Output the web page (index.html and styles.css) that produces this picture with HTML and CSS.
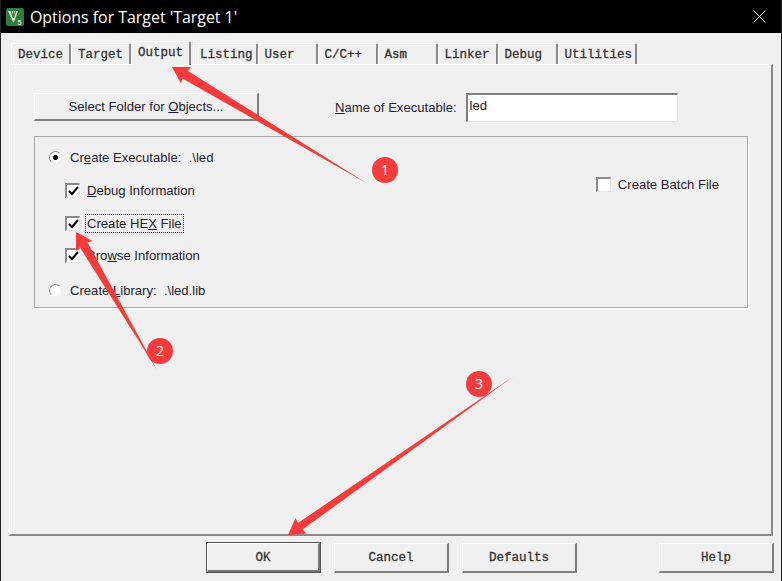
FILE: index.html
```html
<!DOCTYPE html>
<html lang="en">
<head>
    <meta charset="UTF-8">
    <meta name="viewport" content="width=device-width, initial-scale=1.0">
    <title>Options for Target 'Target 1'</title>
    <link rel="stylesheet" href="styles.css">
</head>
<body>
    <div class="window">
        <header class="titlebar">
            <svg class="app-icon" width="18" height="18" viewBox="0 0 18 18">
                <rect x="0" y="0" width="18" height="18" rx="2" fill="#2f7d3a"/>
                <path d="M2 3h10L7.5 15z" fill="#e8f3e6"/>
                <path d="M5 3l2.4 7M7.4 3v7M9.8 3L7.6 10" stroke="#2f7d3a" stroke-width="1.1" fill="none"/>
                <text x="11.5" y="16.5" class="app-icon-num">5</text>
            </svg>
            <span class="title">Options for Target 'Target 1'</span>
            <svg class="close" width="13" height="13" viewBox="0 0 13 13">
                <path d="M0.5 0.5l12 12M12.5 0.5l-12 12" stroke="#fff" stroke-width="1" fill="none"/>
            </svg>
        </header>

        <main class="content">
            <nav class="tabs">
                <div class="tab">Device</div>
                <div class="tab">Target</div>
                <div class="tab active">Output</div>
                <div class="tab">Listing</div>
                <div class="tab">User</div>
                <div class="tab">C/C++</div>
                <div class="tab">Asm</div>
                <div class="tab">Linker</div>
                <div class="tab">Debug</div>
                <div class="tab">Utilities</div>
            </nav>

            <section class="panel">
                <div class="top-row">
                    <button class="btn folder-btn">Select Folder for <u>O</u>bjects...</button>
                    <label class="name-label"><u>N</u>ame of Executable:</label>
                    <input class="name-input" type="text" value="led">
                </div>

                <div class="group">
                    <div class="options">
                        <div class="row">
                            <span class="radio checked"></span>
                            <span>Cr<u>e</u>ate Executable:&nbsp; .\led</span>
                        </div>
                        <div class="row sub">
                            <span class="check on"><svg width="11" height="10" viewBox="0 0 11 10"><path d="M1 5l3 3 6-7" stroke="#000" stroke-width="2" fill="none"/></svg></span>
                            <span><u>D</u>ebug Information</span>
                        </div>
                        <div class="row sub">
                            <span class="check on"><svg width="11" height="10" viewBox="0 0 11 10"><path d="M1 5l3 3 6-7" stroke="#000" stroke-width="2" fill="none"/></svg></span>
                            <span class="focused">Create HE<u>X</u> File</span>
                        </div>
                        <div class="row sub browse">
                            <span class="check on"><svg width="11" height="10" viewBox="0 0 11 10"><path d="M1 5l3 3 6-7" stroke="#000" stroke-width="2" fill="none"/></svg></span>
                            <span>Bro<u>w</u>se Information</span>
                        </div>
                        <div class="row library">
                            <span class="radio"></span>
                            <span>Create <u>L</u>ibrary:&nbsp; .\led.lib</span>
                        </div>
                    </div>
                    <div class="row batch">
                        <span class="check"></span>
                        <span>Create Batch File</span>
                    </div>
                </div>
            </section>

            <footer class="actions">
                <button class="btn action default">OK</button>
                <button class="btn action">Cancel</button>
                <button class="btn action">Defaults</button>
                <button class="btn action help">Help</button>
            </footer>
        </main>

        <svg class="notes" width="782" height="581" viewBox="0 0 782 581">
            <polygon points="172,67 191,67 188,71 368,184 182.5,78.5 181,83.5"/>
            <polygon points="76,232 92.5,241 87.5,242.5 157,370 80,247.5 76,251"/>
            <polygon points="288,535 306.5,533.5 302.5,529.5 514,376 298,523 295.5,518"/>
            <circle cx="385" cy="170" r="13"/>
            <circle cx="160" cy="351" r="13"/>
            <circle cx="479" cy="384" r="13"/>
            <text x="385" y="175" class="num">1</text>
            <text x="160" y="356" class="num">2</text>
            <text x="479" y="389" class="num">3</text>
        </svg>
    </div>
</body>
</html>
```

FILE: styles.css
```css
body {
    margin: 0;
    background-color: #f0f0f0;
    font-family: "Liberation Sans", Arial, sans-serif;
    font-size: 13.1px;
    color: #1f2230;
    overflow: hidden;
}
.window {
    position: relative;
    width: 782px;
    height: 581px;
    box-sizing: border-box;
    border-left: 1px solid #222;
    border-right: 1px solid #222;
    display: flex;
    flex-direction: column;
}
.titlebar {
    height: 33px;
    flex: none;
    background-color: #000;
    display: flex;
    align-items: center;
    padding: 0 15px 0 5px;
    color: #fff;
}
.app-icon {
    margin-right: 6px;
}
.app-icon-num {
    font-family: "Liberation Sans", sans-serif;
    font-size: 7px;
    fill: #fff;
}
.title {
    font-family: "Open Sans", sans-serif;
    font-size: 15.9px;
    flex: 1;
}
.content {
    flex: 1;
    display: flex;
    flex-direction: column;
    padding: 8px 8px 8px 8px;
    min-height: 0;
}
.tabs {
    display: flex;
    align-items: flex-end;
    height: 23px;
    padding-left: 2px;
}
.tab {
    height: 20px;
    min-width: 48px;
    padding: 0 3px 0 6px;
    font-family: "Liberation Mono", monospace;
    font-size: 12.5px;
    -webkit-text-stroke: 0.3px #333;
    color: #333;
    line-height: 22px;
    background-color: #f0f0f0;
    border-top: 1px solid #fff;
    border-left: 1px solid #fff;
    border-right: 2px solid #8a8a8a;
    border-radius: 2px 2px 0 0;
}
.tab.active {
    height: 23px;
    margin-bottom: -1px;
    margin-right: 2px;
    position: relative;
    z-index: 1;
}
.panel {
    flex: 1;
    border-top: 1px solid #fff;
    border-left: 1px solid #fff;
    border-right: 2px solid #8a8a8a;
    border-bottom: 2px solid #8a8a8a;
    padding: 28px 23px 0 24px;
    min-height: 0;
}
.top-row {
    display: flex;
    align-items: center;
    height: 28px;
}
.btn {
    background-color: #f0f0f0;
    border: none;
    border-top: 1px solid #fff;
    border-left: 1px solid #fff;
    border-right: 2px solid #808080;
    border-bottom: 2px solid #808080;
    padding: 0;
    font-family: inherit;
    font-size: inherit;
    color: inherit;
}
.folder-btn {
    width: 225px;
    height: 28px;
}
.name-label {
    margin-left: 76px;
}
.name-input {
    width: 207px;
    height: 21px;
    margin-left: 9px;
    padding: 0 0 5px 2px;
    border: 2px solid #808080;
    border-right: 1px solid #e4e4e4;
    border-bottom: 1px solid #e4e4e4;
    font-family: inherit;
    font-size: inherit;
    color: #1f2230;
    background-color: #fff;
    outline: none;
}
.group {
    margin-top: 15px;
    height: 172px;
    box-sizing: border-box;
    border: 1px solid #a8a8a8;
    box-shadow: 1px 1px 0 #fff;
    display: flex;
    justify-content: space-between;
    padding: 9px 28px 0 14px;
}
.options {
    display: flex;
    flex-direction: column;
    gap: 11px;
}
.row {
    display: flex;
    align-items: center;
    height: 22px;
    gap: 7px;
}
.row.sub {
    margin-left: 16px;
}
.row.browse {
    margin-top: -1px;
}
.row.library {
    margin-top: 2px;
}
.batch {
    margin-top: 27px;
}
.radio {
    width: 13px;
    height: 13px;
    margin-right: 1px;
    box-sizing: border-box;
    border-radius: 50%;
    background-color: #fff;
    border: 1.5px solid #8a8a8a;
    border-right-color: #eee;
    border-bottom-color: #eee;
    display: flex;
    align-items: center;
    justify-content: center;
}
.radio.checked::after {
    content: "";
    width: 5px;
    height: 5px;
    border-radius: 50%;
    background-color: #000;
}
.check {
    width: 15px;
    height: 15px;
    box-sizing: border-box;
    background-color: #fff;
    border: 2px solid #8a8a8a;
    border-right: 1px solid #e8e8e8;
    border-bottom: 1px solid #e8e8e8;
    display: flex;
    align-items: center;
    justify-content: center;
}
.focused {
    outline: 1px dotted #333;
    outline-offset: 1px;
}
.actions {
    flex: none;
    height: 37px;
    display: flex;
    align-items: flex-end;
    padding-left: 197px;
    gap: 13px;
}
.action {
    flex: none;
    width: 115px;
    height: 30px;
    padding-top: 1px;
    font-family: "Liberation Mono", monospace;
    font-size: 12.5px;
    -webkit-text-stroke: 0.3px #333;
    color: #333;
}
.action.default {
    box-shadow: 0 0 0 1px #555;
    border-right-color: #777;
    border-bottom-color: #777;
    width: 113px;
    height: 29px;
    margin: 0 1px 1px 1px;
}
.action.help {
    margin-left: 69px;
}
.notes {
    position: absolute;
    top: 0;
    left: -1px;
    pointer-events: none;
    fill: #f63b3b;
}
.num {
    font-family: "Open Sans", sans-serif;
    font-size: 14px;
    fill: #fff;
    text-anchor: middle;
}
```
